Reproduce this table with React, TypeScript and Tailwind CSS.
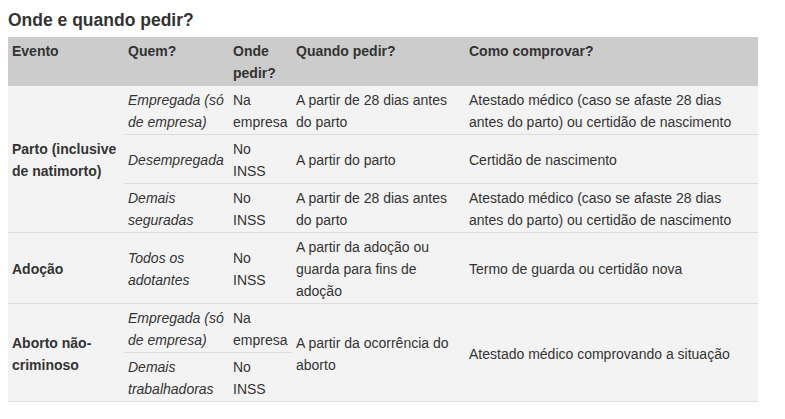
const td = 'px-1 pt-[3px] pb-[1px] align-middle';

const Row = ({ children, line = true }: { children: React.ReactNode; line?: boolean }) => (
  <tr className={line ? 'border-b border-[#dddddd]' : ''}>{children}</tr>
);

const NoInss = () => (
  <>
    No
    <br />
    INSS
  </>
);

export default function App() {
  return (
    <div className="min-h-screen bg-white px-2 pt-[9px] text-[#333333] font-['Liberation_Sans',Arial,sans-serif]">
      <h2 className="text-[17.5px] font-bold leading-[22px] mb-[6px]">Onde e quando pedir?</h2>
      <table className="w-[750px] table-fixed border-collapse text-[14px] leading-[22px]">
        <colgroup>
          <col className="w-[116px]" />
          <col className="w-[105px]" />
          <col className="w-[63px]" />
          <col className="w-[173px]" />
          <col />
        </colgroup>
        <thead>
          <tr className="bg-[#cccccc] text-left font-bold">
            <th className="px-1 pt-[3px] pb-[2px] align-top">Evento</th>
            <th className="px-1 pt-[3px] pb-[2px] align-top">Quem?</th>
            <th className="px-1 pt-[3px] pb-[2px] align-top">Onde pedir?</th>
            <th className="px-1 pt-[3px] pb-[2px] align-top">Quando pedir?</th>
            <th className="px-1 pt-[3px] pb-[2px] align-top">Como comprovar?</th>
          </tr>
        </thead>
        <tbody className="bg-[#f3f3f3]">
          <Row>
            <td rowSpan={3} className={`${td} font-bold border-b border-[#dddddd]`}>Parto (inclusive de natimorto)</td>
            <td className={`${td} italic`}>Empregada (só de empresa)</td>
            <td className={td}>Na empresa</td>
            <td className={td}>A partir de 28 dias antes do parto</td>
            <td className={td}>Atestado médico (caso se afaste 28 dias antes do parto) ou certidão de nascimento</td>
          </Row>
          <Row>
            <td className={`${td} italic`}>Desempregada</td>
            <td className={td}><NoInss /></td>
            <td className={td}>A partir do parto</td>
            <td className={td}>Certidão de nascimento</td>
          </Row>
          <Row>
            <td className={`${td} italic`}>Demais seguradas</td>
            <td className={td}><NoInss /></td>
            <td className={td}>A partir de 28 dias antes do parto</td>
            <td className={td}>Atestado médico (caso se afaste 28 dias antes do parto) ou certidão de nascimento</td>
          </Row>
          <Row>
            <td className={`${td} font-bold`}>Adoção</td>
            <td className={`${td} italic`}>Todos os adotantes</td>
            <td className={td}><NoInss /></td>
            <td className={td}>A partir da adoção ou guarda para fins de adoção</td>
            <td className={td}>Termo de guarda ou certidão nova</td>
          </Row>
          <Row>
            <td rowSpan={2} className={`${td} font-bold border-b border-[#dddddd]`}>Aborto não-criminoso</td>
            <td className={`${td} italic`}>Empregada (só de empresa)</td>
            <td className={td}>Na empresa</td>
            <td rowSpan={2} className={`${td} border-b border-[#dddddd]`}>A partir da ocorrência do aborto</td>
            <td rowSpan={2} className={`${td} border-b border-[#dddddd]`}>Atestado médico comprovando a situação</td>
          </Row>
          <Row>
            <td className={`${td} italic`}>Demais trabalhadoras</td>
            <td className={td}><NoInss /></td>
          </Row>
        </tbody>
      </table>
    </div>
  );
}
